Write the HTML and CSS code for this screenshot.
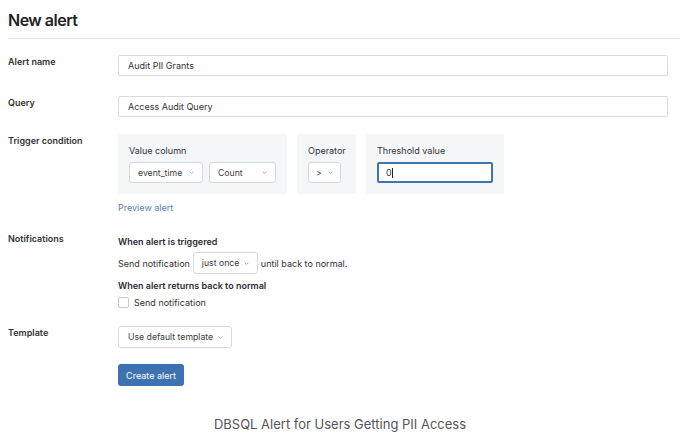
FILE: index.html
```html
<!DOCTYPE html>
<html>
<head>
<meta charset="utf-8">
<link rel="stylesheet" href="styles.css">
</head>
<body>
<div class="page">
  <h1 class="title">New alert</h1>
  <div class="divider"></div>

  <div class="row row-name">
    <div class="label">Alert name</div>
    <div class="field"><div class="input">Audit PII Grants</div></div>
  </div>

  <div class="row row-query">
    <div class="label">Query</div>
    <div class="field"><div class="input">Access Audit Query</div></div>
  </div>

  <div class="row row-trigger">
    <div class="label">Trigger condition</div>
    <div class="field">
      <div class="boxes">
        <div class="box box-value">
          <div class="box-label">Value column</div>
          <div class="box-controls">
            <div class="select sel-event"><span>event_time</span><svg class="chev" viewBox="0 0 8 5"><path d="M1 1l3 3 3-3"/></svg></div>
            <div class="select sel-count"><span>Count</span><svg class="chev" viewBox="0 0 8 5"><path d="M1 1l3 3 3-3"/></svg></div>
          </div>
        </div>
        <div class="box box-op">
          <div class="box-label">Operator</div>
          <div class="box-controls">
            <div class="select sel-op"><span>&gt;</span><svg class="chev" viewBox="0 0 8 5"><path d="M1 1l3 3 3-3"/></svg></div>
          </div>
        </div>
        <div class="box box-thr">
          <div class="box-label">Threshold value</div>
          <div class="box-controls">
            <div class="thr-input">0<span class="caret"></span></div>
          </div>
        </div>
      </div>
      <div class="preview">Preview alert</div>
    </div>
  </div>

  <div class="row row-notif">
    <div class="label">Notifications</div>
    <div class="field">
      <div class="subhead">When alert is triggered</div>
      <div class="send-row">
        <span>Send notification</span>
        <div class="select sel-once"><span>just once</span><svg class="chev" viewBox="0 0 8 5"><path d="M1 1l3 3 3-3"/></svg></div>
        <span>until back to normal.</span>
      </div>
      <div class="subhead sub2">When alert returns back to normal</div>
      <div class="check-row">
        <span class="checkbox"></span>
        <span>Send notification</span>
      </div>
    </div>
  </div>

  <div class="row row-template">
    <div class="label">Template</div>
    <div class="field">
      <div class="select sel-template"><span>Use default template</span><svg class="chev" viewBox="0 0 8 5"><path d="M1 1l3 3 3-3"/></svg></div>
      <button class="btn">Create alert</button>
    </div>
  </div>

  <div class="caption">DBSQL Alert for Users Getting PII Access</div>
</div>
</body>
</html>
```

FILE: styles.css
```css
* { box-sizing: border-box; }
html, body { margin: 0; padding: 0; background: #fff; }
body {
  font-family: Inter, "Noto Sans", "Liberation Sans", sans-serif;
  color: #2f3337;
  font-size: 9px;
}
.page {
  width: 680px;
  height: 432px;
  padding: 0 0 0 8px;
  display: flex;
  flex-direction: column;
}
.title {
  margin: 10px 0 0 0;
  font-size: 16px;
  font-weight: 600;
  line-height: 20px;
  color: #222;
  letter-spacing: -0.5px;
}
.divider {
  margin-top: 8px;
  height: 1px;
  background: #e3e5e8;
}
.row {
  display: flex;
}
.label {
  width: 110px;
  flex: none;
  font-weight: 600;
  color: #333;
  line-height: 12px;
}
.field {
  flex: 1;
  display: flex;
  flex-direction: column;
  align-items: flex-start;
}
.row-name { margin-top: 16px; }
.row-name .label { padding-top: 1px; }
.row-query { margin-top: 20px; }
.row-query .label { padding-top: 1px; }
.input {
  width: 550px;
  height: 21px;
  border: 1px solid #d9dcdf;
  border-radius: 2px;
  padding: 0 9px;
  line-height: 19px;
  color: #333;
}
.row-trigger { margin-top: 17px; }
.row-trigger .label { padding-top: 1px; }
.boxes {
  display: flex;
  gap: 10px;
}
.box {
  background: #f5f6f7;
  height: 60px;
  padding: 11px 11px 0 11px;
  border-radius: 2px;
}
.box-value { width: 169px; }
.box-op { width: 59px; }
.box-thr { width: 138px; }
.box-label {
  line-height: 12px;
  color: #333;
}
.box-controls {
  margin-top: 5px;
  display: flex;
  gap: 6px;
}
.select {
  display: inline-flex;
  align-items: center;
  justify-content: space-between;
  height: 21px;
  border: 1px solid #d6d9dc;
  border-radius: 3px;
  background: #fff;
  padding: 0 8px;
  color: #3a3d41;
  white-space: nowrap;
  font-size: 8.7px;
}
.chev {
  flex: none;
  width: 5px;
  height: 3px;
  fill: none;
  stroke: #8a8e92;
  stroke-width: 1.2;
  margin-left: 5px;
}
.sel-event { width: 74px; }
.sel-count { width: 67px; }
.sel-op { width: 33px; padding: 0 7px; }
.thr-input {
  width: 116px;
  height: 21px;
  border: 2px solid #3f73b2;
  border-radius: 2px;
  background: #fff;
  padding: 0 7px;
  line-height: 17px;
  display: flex;
  align-items: center;
  color: #333;
}
.caret {
  display: inline-block;
  width: 1px;
  height: 10px;
  background: #222;
}
.preview {
  margin-top: 8px;
  color: #5b82b4;
  line-height: 12px;
}
.row-notif { margin-top: 19px; }
.row-notif .label { padding-top: 0; }
.subhead {
  font-weight: 600;
  line-height: 12px;
  margin-top: 3px;
  color: #2a2d31;
}
.send-row {
  margin-top: 4px;
  display: flex;
  align-items: center;
  gap: 3px;
  color: #333;
}
.send-row > span:first-child { margin-right: 0; }
.sel-once { width: 65px; height: 22px; padding: 0 8px; }
.sub2 { margin-top: 6px; }
.check-row {
  margin-top: 5px;
  display: flex;
  align-items: center;
  gap: 5px;
  color: #333;
}
.checkbox {
  width: 11px;
  height: 11px;
  border: 1px solid #c7cbcf;
  border-radius: 2px;
  background: #fff;
}
.row-template { margin-top: 18px; }
.row-template .label { padding-top: 1px; }
.sel-template { width: 114px; height: 22px; padding: 0 9px; }
.btn {
  margin-top: 16px;
  width: 66px;
  height: 22px;
  border: none;
  border-radius: 3px;
  background: #3e71af;
  color: #fff;
  font-family: inherit;
  font-size: 9px;
  padding: 0;
}
.caption {
  margin-top: 30px;
  margin-left: -8px;
  text-align: center;
  font-size: 13px;
  color: #555;
  line-height: 16px;
}
```
